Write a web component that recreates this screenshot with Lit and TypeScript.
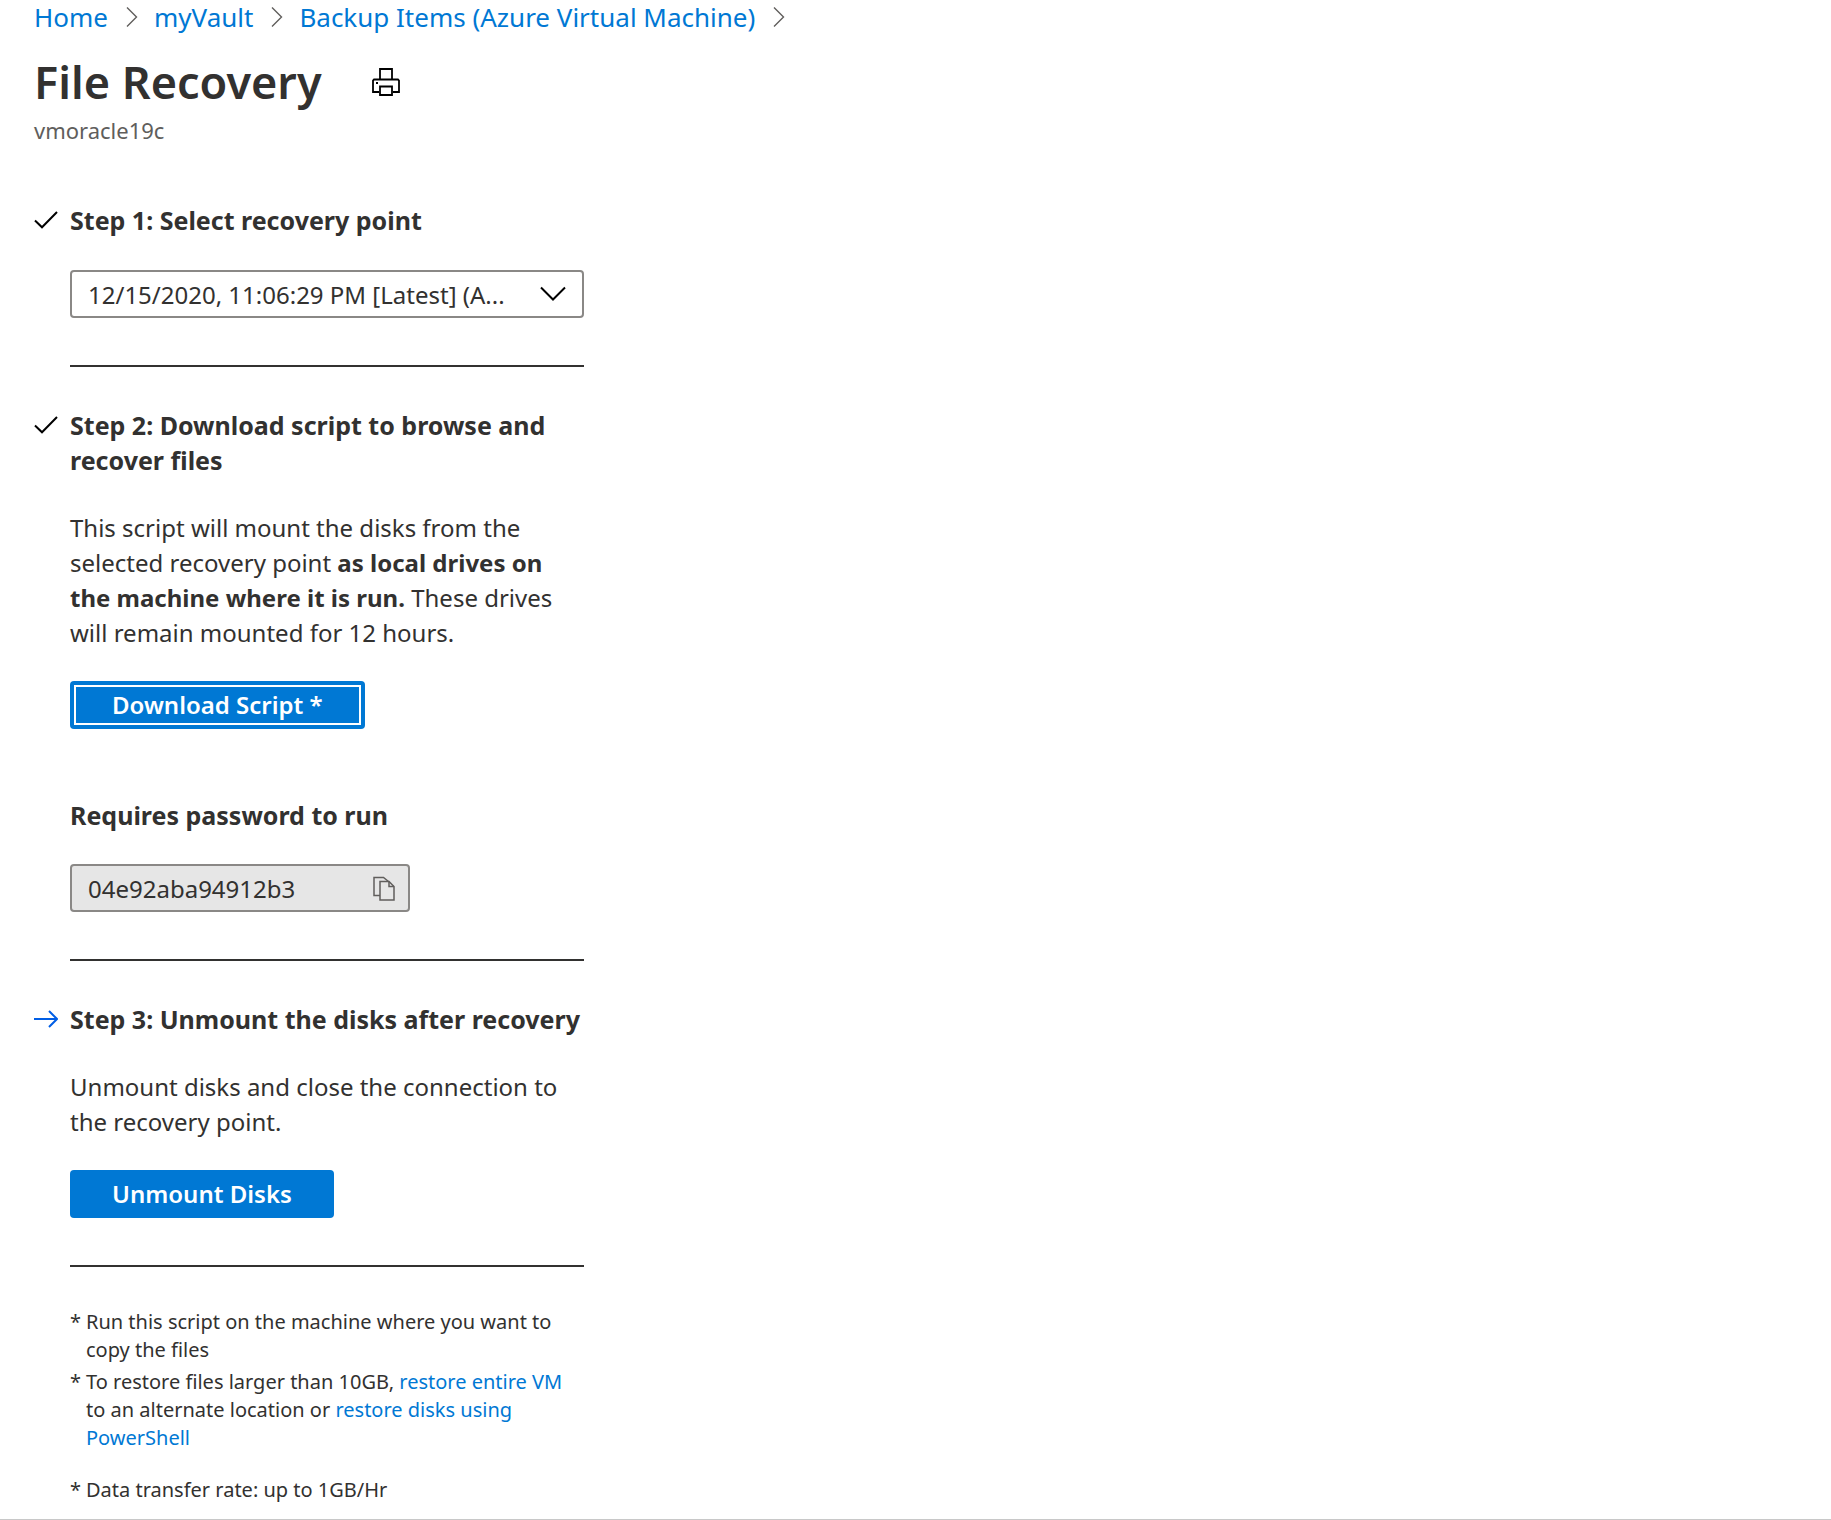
import { LitElement, html, css, svg } from "lit";
import { customElement, state } from "lit/decorators.js";

const chevronRight = html`<svg class="crumb-sep" viewBox="0 0 12 22" aria-hidden="true">
  <path d="M1 1.5 10.5 11 1 20.5" fill="none" stroke="#605e5c" stroke-width="1.4" />
</svg>`;

const printer = html`<svg class="print-icon" viewBox="0 0 28 28" aria-hidden="true">
  ${svg`<g fill="none" stroke="#000" stroke-width="1.8">
    <path d="M8 11V1h12v10" />
    <path d="M7 24H1V12.500L2 11.500h24l1 1V24h-6" />
    <path d="M8 18.500h12V27H8z" />
  </g>
  <path d="M4 14h2v2H4z" fill="#000" />`}
</svg>`;

const check = html`<svg class="step-icon" viewBox="0 0 24 18" aria-hidden="true">
  <path d="M1 9.500 8 16.300 23 1" fill="none" stroke="#000" stroke-width="2" />
</svg>`;

const arrow = html`<svg class="step-icon" viewBox="0 0 24 18" aria-hidden="true">
  <path d="M0 9h23M15 1l8 8-8 8" fill="none" stroke="#015ee5" stroke-width="2" />
</svg>`;

const chevronDown = html`<svg class="select-icon" viewBox="0 0 26 16" aria-hidden="true">
  <path d="M1 1.500 13 13.500 25 1.500" fill="none" stroke="#000" stroke-width="2" />
</svg>`;

const copy = html`<svg class="copy-icon" viewBox="0 0 22 25" aria-hidden="true">
  <g fill="none" stroke="#605e5c" stroke-width="1.500">
    <path d="M7 19.500H1v-18h9.500l5 4" />
    <path d="M7 5.500h9l5 5v13.500H7z" />
    <path d="M16 5.500v5h5" />
  </g>
</svg>`;

@customElement("app-root")
export class AppRoot extends LitElement {
  @state() private password = "04e92aba94912b3";

  static styles = css`
    :host {
      display: block;
      background: #fff;
      color: #323130;
      font-family: "Noto Sans", "Open Sans", sans-serif;
      font-size: 24px;
      line-height: 35px;
      border-bottom: 1px solid #c8c8c8;
    }
    * {
      box-sizing: border-box;
    }
    h1, h2, h3, p, ol, ul {
      margin: 0;
      padding: 0;
    }
    ol, ul {
      list-style: none;
    }
    svg {
      display: block;
      flex: none;
    }
    a {
      color: #0078d4;
      text-decoration: none;
    }
    button, input, select {
      font: inherit;
      color: inherit;
      margin: 0;
    }
    .page {
      padding: 0 34px 15px;
    }
    .crumbs {
      display: flex;
      align-items: center;
      gap: 16px;
      font-size: 26px;
      line-height: 34px;
    }
    .crumb {
      display: flex;
      align-items: center;
      gap: 18px;
    }
    .crumb-sep {
      width: 12px;
      height: 22px;
    }
    .title-row {
      display: flex;
      align-items: center;
      gap: 50px;
      margin-top: 16px;
    }
    .title {
      font-size: 45px;
      line-height: 64px;
      font-weight: 600;
    }
    .print {
      padding: 0;
      border: 0;
      background: none;
    }
    .print-icon {
      width: 28px;
      height: 28px;
    }
    .subtitle {
      font-size: 22px;
      line-height: 32px;
      color: #605e5c;
    }
    .steps {
      max-width: 550px;
      margin-top: 57px;
    }
    .step {
      display: grid;
      grid-template-columns: 24px minmax(0, 1fr);
      column-gap: 12px;
    }
    .step-icon {
      width: 24px;
      height: 18px;
      margin-top: 8px;
    }
    .heading, .label {
      font-size: 25px;
      font-weight: 700;
    }
    .body {
      grid-column: 2;
      display: flex;
      flex-direction: column;
      align-items: flex-start;
      gap: 31px;
      margin-top: 32px;
      padding-bottom: 47px;
      border-bottom: 2px solid #323130;
      margin-bottom: 41px;
    }
    .field {
      display: grid;
      align-items: center;
      justify-items: end;
      width: 100%;
    }
    .field > * {
      grid-area: 1 / 1;
    }
    .select, .password {
      width: 100%;
      height: 48px;
      border: 2px solid #8a8886;
      border-radius: 4px;
      padding: 0 56px 0 16px;
      background: #fff;
    }
    .select {
      appearance: none;
      text-overflow: ellipsis;
    }
    .select-icon {
      width: 26px;
      height: 16px;
      margin-right: 18px;
      pointer-events: none;
    }
    .short {
      max-width: 340px;
    }
    .password {
      background: #e6e6e6;
    }
    .copy {
      padding: 0;
      border: 0;
      background: none;
      margin-right: 15px;
    }
    .copy-icon {
      width: 22px;
      height: 25px;
    }
    .primary {
      height: 48px;
      padding: 0 42px;
      border: 0;
      border-radius: 4px;
      background: #0078d4;
      color: #fff;
      font-weight: 600;
      line-height: 44px;
    }
    .focused {
      outline: 2px solid #fff;
      outline-offset: -6px;
    }
    .label {
      margin-top: 38px;
    }
    .notes {
      display: flex;
      flex-direction: column;
      gap: 4px;
      max-width: 550px;
      padding-left: 36px;
      font-size: 20px;
      line-height: 28px;
    }
    .note {
      display: flex;
      gap: 6px;
    }
    .mark {
      flex: none;
      width: 10px;
    }
    .spaced {
      margin-top: 20px;
    }
  `;

  private copyPassword() {
    navigator.clipboard?.writeText(this.password);
  }

  render() {
    return html`
      <main class="page">
        <nav aria-label="Breadcrumb">
          <ol class="crumbs">
            ${["Home", "myVault", "Backup Items (Azure Virtual Machine)"].map(
              (name) => html`<li class="crumb"><a href="#">${name}</a>${chevronRight}</li>`
            )}
          </ol>
        </nav>
        <header>
          <div class="title-row">
            <h1 class="title">File Recovery</h1>
            <button class="print" aria-label="Print">${printer}</button>
          </div>
          <p class="subtitle">vmoracle19c</p>
        </header>

        <div class="steps">
          <section class="step">
            ${check}
            <h2 class="heading" id="step1">Step 1: Select recovery point</h2>
            <div class="body">
              <div class="field">
                <select class="select" aria-labelledby="step1">
                  <option>12/15/2020, 11:06:29 PM [Latest] (A...</option>
                </select>
                ${chevronDown}
              </div>
            </div>
          </section>

          <section class="step">
            ${check}
            <h2 class="heading">Step 2: Download script to browse and recover files</h2>
            <div class="body">
              <p>
                This script will mount the disks from the selected recovery point
                <strong>as local drives on the machine where it is run.</strong>
                These drives will remain mounted for 12 hours.
              </p>
              <button class="primary focused">Download Script *</button>
              <label class="label" for="password">Requires password to run</label>
              <div class="field short">
                <input class="password" id="password" type="text" readonly .value=${this.password} />
                <button class="copy" aria-label="Copy" @click=${this.copyPassword}>${copy}</button>
              </div>
            </div>
          </section>

          <section class="step">
            ${arrow}
            <h2 class="heading">Step 3: Unmount the disks after recovery</h2>
            <div class="body">
              <p>Unmount disks and close the connection to the recovery point.</p>
              <button class="primary">Unmount Disks</button>
            </div>
          </section>
        </div>

        <ul class="notes">
          <li class="note">
            <span class="mark">*</span>
            <span>Run this script on the machine where you want to copy the files</span>
          </li>
          <li class="note">
            <span class="mark">*</span>
            <span>To restore files larger than 10GB, <a href="#">restore entire VM</a> to an alternate
              location or <a href="#">restore disks using PowerShell</a></span>
          </li>
          <li class="note spaced">
            <span class="mark">*</span>
            <span>Data transfer rate: up to 1GB/Hr</span>
          </li>
        </ul>
      </main>
    `;
  }
}
